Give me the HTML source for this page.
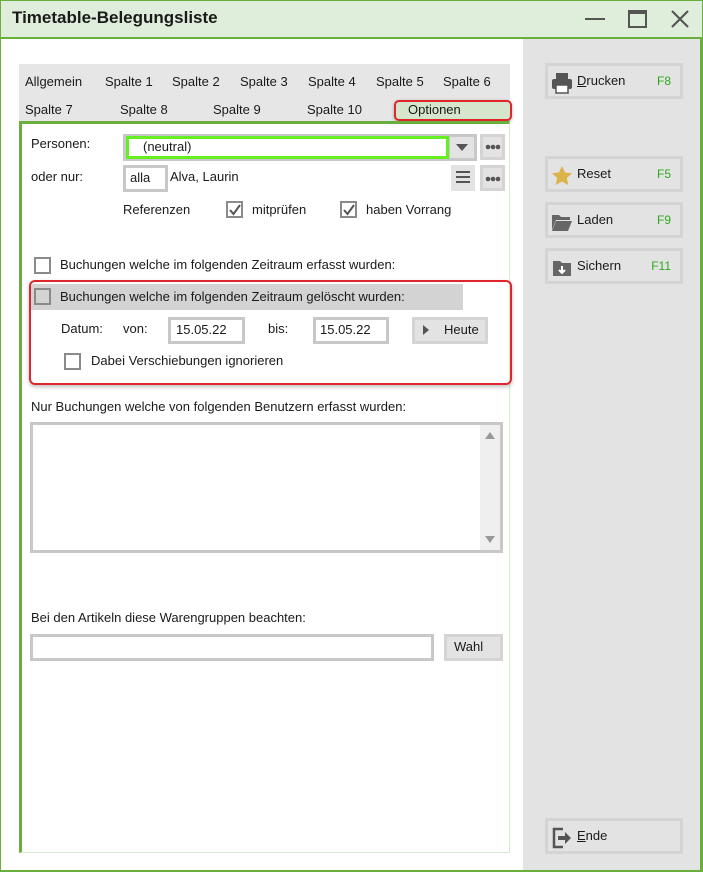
<!DOCTYPE html>
<html><head><meta charset="utf-8"><style>
*{box-sizing:border-box;margin:0;padding:0}
body{width:703px;height:872px;position:relative;overflow:hidden;background:#fff;font-family:"Liberation Sans",sans-serif;font-size:13px;color:#1a1a1a}
.a{position:absolute}
.t{position:absolute;white-space:nowrap;line-height:16px}
.cb{position:absolute;width:17px;height:17px;border:2px solid #8a8a8a;background:#fff}
.fld{position:absolute;border:3px solid #c8c8c8;background:#fff}
.btn{position:absolute;border:3px solid #d4d4d4;background:#e3e3e3}
.rb{position:absolute;left:545px;width:138px;height:36px;border:3px solid #d4d4d4;background:#e3e3e3}
.rb .l{position:absolute;left:29px;top:7px;font-size:13px}
.rb .k{position:absolute;right:9px;top:8px;color:#2fa81f;font-size:12px}
.rb svg{position:absolute;left:3px;top:5px}
</style></head><body>
<div class="a" style="left:0;top:0;width:703px;height:872px;border:1px solid #6aae3e"></div>
<div class="a" style="left:1px;top:1px;width:701px;height:36px;background:#dfeedb"></div>
<div class="a" style="left:0;top:37px;width:703px;height:2px;background:#6aae3e"></div>
<div class="t" style="left:12px;top:8px;font-size:17px;font-weight:bold;line-height:20px">Timetable-Belegungsliste</div>
<div class="a" style="left:585px;top:18px;width:20px;height:2px;background:#555"></div>
<div class="a" style="left:628px;top:10px;width:19px;height:18px;border:2px solid #555;border-top-width:4px"></div>
<svg class="a" style="left:670px;top:9px" width="20" height="20"><path d="M2 2L18 18M18 2L2 18" stroke="#555" stroke-width="2.2"/></svg>
<div class="a" style="left:523px;top:39px;width:178px;height:832px;background:#e3e3e3"></div>
<div class="a" style="left:700px;top:39px;width:2px;height:832px;background:#6aae3e"></div>
<div class="a" style="left:0;top:870px;width:703px;height:2px;background:#6aae3e"></div>

<div class="rb" style="top:63px"><svg width="22" height="24" viewBox="0 0 22 24"><rect x="5" y="2" width="12" height="6" fill="#555"/><rect x="1" y="8" width="20" height="10" rx="2" fill="#555"/><rect x="5" y="14" width="12" height="8" fill="#fff" stroke="#555" stroke-width="1.5"/></svg><span class="l"><u>D</u>rucken</span><span class="k">F8</span></div>
<div class="rb" style="top:156px"><svg width="22" height="24" viewBox="0 0 22 24"><path d="M11 2l3 6.5 7 .8-5.2 4.8 1.5 7L11 17.5 4.7 21l1.5-7L1 9.3l7-.8z" fill="#dcb24a"/></svg><span class="l">Reset</span><span class="k">F5</span></div>
<div class="rb" style="top:202px"><svg width="22" height="24" viewBox="0 0 22 24"><path d="M1 5h7l2 2h9v3H5L1 20z" fill="#666"/><path d="M5 11h16l-4 10H1z" fill="#666"/></svg><span class="l">Laden</span><span class="k">F9</span></div>
<div class="rb" style="top:248px"><svg width="22" height="24" viewBox="0 0 22 24"><path d="M2 5h7l2 2h9v13H2z" fill="#666"/><path d="M11 10v7M8 14l3 3 3-3" stroke="#fff" stroke-width="2" fill="none"/></svg><span class="l">Sichern</span><span class="k">F11</span></div>
<div class="rb" style="top:818px"><svg width="22" height="24" viewBox="0 0 22 24"><path d="M12 3H3v18h9" stroke="#555" stroke-width="2.5" fill="none"/><path d="M7 10h7V6l6 6-6 6v-4H7z" fill="#555"/></svg><span class="l"><u>E</u>nde</span></div>

<div class="a" style="left:19px;top:64px;width:491px;height:57px;background:#e6e6e6"></div>
<div class="t" style="left:25px;top:74px">Allgemein</div>
<div class="t" style="left:105px;top:74px">Spalte 1</div>
<div class="t" style="left:172px;top:74px">Spalte 2</div>
<div class="t" style="left:240px;top:74px">Spalte 3</div>
<div class="t" style="left:308px;top:74px">Spalte 4</div>
<div class="t" style="left:376px;top:74px">Spalte 5</div>
<div class="t" style="left:443px;top:74px">Spalte 6</div>
<div class="t" style="left:25px;top:102px">Spalte 7</div>
<div class="t" style="left:120px;top:102px">Spalte 8</div>
<div class="t" style="left:213px;top:102px">Spalte 9</div>
<div class="t" style="left:307px;top:102px">Spalte 10</div>
<div class="a" style="left:394px;top:100px;width:118px;height:21px;border:2px solid #e0262b;border-radius:5px;background:#d5e6cc;box-shadow:0 1px 3px rgba(0,0,0,.3)"></div>
<div class="t" style="left:408px;top:102px">Optionen</div>
<div class="a" style="left:19px;top:121px;width:491px;height:732px;border-left:3px solid #6aae3e;border-top:3px solid #6aae3e;border-right:1px solid #d8ead0;border-bottom:1px solid #d8ead0"></div>

<div class="t" style="left:31px;top:136px">Personen:</div>
<div class="a" style="left:123px;top:134px;width:354px;height:27px;background:#c8c8c8"></div>
<div class="a" style="left:126px;top:136px;width:323px;height:23px;border:3px solid #66ee22;background:#fff"></div>
<div class="t" style="left:143px;top:139px">(neutral)</div>
<div class="a" style="left:450px;top:137px;width:24px;height:21px;background:#e3e3e3"></div>
<svg class="a" style="left:456px;top:144px" width="12" height="7"><path d="M0 0h12L6 7z" fill="#555"/></svg>
<div class="btn" style="left:480px;top:134px;width:25px;height:26px"></div>
<svg class="a" style="left:485px;top:144px" width="16" height="6"><circle cx="3" cy="3" r="2.3" fill="#555"/><circle cx="8" cy="3" r="2.3" fill="#555"/><circle cx="13" cy="3" r="2.3" fill="#555"/></svg>

<div class="t" style="left:31px;top:169px">oder nur:</div>
<div class="fld" style="left:123px;top:165px;width:45px;height:27px"></div>
<div class="t" style="left:130px;top:170px">alla</div>
<div class="t" style="left:170px;top:169px">Alva, Laurin</div>
<div class="a" style="left:451px;top:165px;width:24px;height:26px;background:#e3e3e3"></div>
<div class="a" style="left:456px;top:171px;width:14px;height:2px;background:#555;box-shadow:0 5px 0 #555,0 10px 0 #555"></div>
<div class="btn" style="left:480px;top:165px;width:25px;height:26px"></div>
<svg class="a" style="left:485px;top:176px" width="16" height="6"><circle cx="3" cy="3" r="2.3" fill="#555"/><circle cx="8" cy="3" r="2.3" fill="#555"/><circle cx="13" cy="3" r="2.3" fill="#555"/></svg>

<div class="t" style="left:123px;top:202px">Referenzen</div>
<div class="cb" style="left:226px;top:201px"></div>
<svg class="a" style="left:228px;top:203px" width="14" height="14"><path d="M2 7l3.5 4L12 2" stroke="#555" stroke-width="2" fill="none"/></svg>
<div class="t" style="left:252px;top:202px">mitprüfen</div>
<div class="cb" style="left:340px;top:201px"></div>
<svg class="a" style="left:342px;top:203px" width="14" height="14"><path d="M2 7l3.5 4L12 2" stroke="#555" stroke-width="2" fill="none"/></svg>
<div class="t" style="left:366px;top:202px">haben Vorrang</div>

<div class="cb" style="left:34px;top:257px"></div>
<div class="t" style="left:60px;top:257px">Buchungen welche im folgenden Zeitraum erfasst wurden:</div>

<div class="a" style="left:29px;top:280px;width:483px;height:105px;border:2px solid #e0262b;border-radius:6px;box-shadow:0 2px 4px rgba(0,0,0,.25)"></div>
<div class="a" style="left:31px;top:284px;width:432px;height:26px;background:#d3d3d3"></div>
<div class="cb" style="left:34px;top:288px;background:#d3d3d3"></div>
<div class="t" style="left:60px;top:289px">Buchungen welche im folgenden Zeitraum gelöscht wurden:</div>
<div class="t" style="left:61px;top:321px">Datum:</div>
<div class="t" style="left:123px;top:321px">von:</div>
<div class="fld" style="left:168px;top:317px;width:77px;height:27px"></div>
<div class="t" style="left:176px;top:322px">15.05.22</div>
<div class="t" style="left:268px;top:321px">bis:</div>
<div class="fld" style="left:313px;top:317px;width:76px;height:27px"></div>
<div class="t" style="left:320px;top:322px">15.05.22</div>
<div class="btn" style="left:412px;top:317px;width:76px;height:27px"></div>
<svg class="a" style="left:423px;top:325px" width="6" height="10"><path d="M0 0l6 5-6 5z" fill="#555"/></svg>
<div class="t" style="left:444px;top:322px">Heute</div>
<div class="cb" style="left:64px;top:353px"></div>
<div class="t" style="left:91px;top:353px">Dabei Verschiebungen ignorieren</div>

<div class="t" style="left:31px;top:399px">Nur Buchungen welche von folgenden Benutzern erfasst wurden:</div>
<div class="a" style="left:30px;top:422px;width:473px;height:131px;border:3px solid #c8c8c8;background:#fff"></div>
<div class="a" style="left:480px;top:425px;width:20px;height:125px;background:#efefef"></div>
<svg class="a" style="left:485px;top:432px" width="10" height="7"><path d="M0 7h10L5 0z" fill="#999"/></svg>
<svg class="a" style="left:485px;top:536px" width="10" height="7"><path d="M0 0h10L5 7z" fill="#999"/></svg>

<div class="t" style="left:31px;top:610px">Bei den Artikeln diese Warengruppen beachten:</div>
<div class="fld" style="left:30px;top:634px;width:404px;height:27px"></div>
<div class="btn" style="left:444px;top:634px;width:59px;height:27px"></div>
<div class="t" style="left:454px;top:639px">Wahl</div>
</body></html>
